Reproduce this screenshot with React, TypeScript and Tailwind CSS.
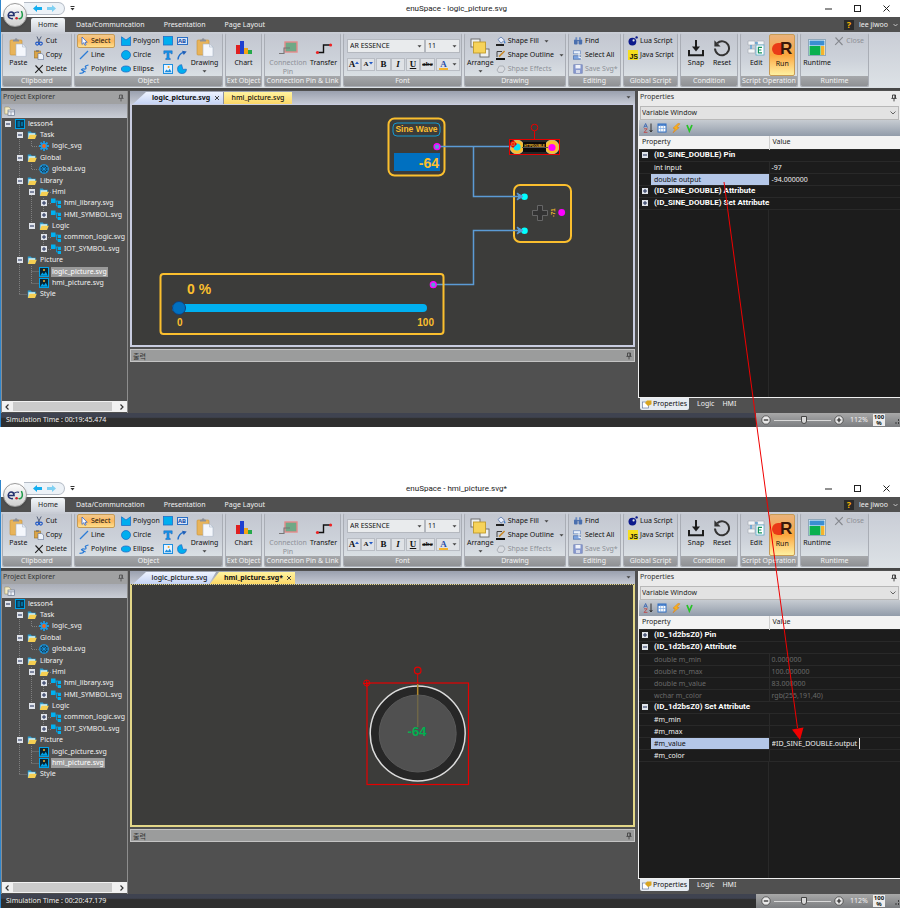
import React from "react";

type IconProps = { w?: number; h?: number; box?: string; className?: string; children: React.ReactNode };

function Icon({ w = 10, h = 10, box, className = "", children }: IconProps) {
  return (
    <svg width={w} height={h} viewBox={box ?? `0 0 ${w} ${h}`} fill="none" className={`shrink-0 ${className}`} aria-hidden="true">
      {children}
    </svg>
  );
}

function Caret({ className = "" }: { className?: string }) {
  return (
    <Icon w={5} h={3} className={className}>
      <path d="M0.5 0.3h4L2.5 2.6z" fill="#444" />
    </Icon>
  );
}

function PinIcon({ color = "#333" }: { color?: string }) {
  return (
    <Icon w={6} h={8}>
      <path d="M1.5 1h3v3.2M1.5 1v3.2M3.9 1v3.2M0.4 4.4h5.2M3 4.4V7.4" stroke={color} strokeWidth="0.9" />
    </Icon>
  );
}

function ClipboardIcon() {
  return (
    <Icon w={18} h={19}>
      <rect x="1" y="2" width="12" height="15" rx="1" fill="#e8b45a" stroke="#c79038" strokeWidth="0.6" />
      <path d="M4 3.6V1.8h1.6a1.5 1.5 0 0 1 3 0H10v1.8z" fill="#8b8f9a" />
      <path d="M7 6h6.5L17 9v9.4H7z" fill="#f4f7fc" stroke="#a9b5c8" strokeWidth="0.6" />
      <path d="M13.5 6v3H17" stroke="#a9b5c8" strokeWidth="0.6" />
    </Icon>
  );
}

function CutIcon() {
  return (
    <Icon>
      <path d="M3 0.5l2.6 6M7.2 0.5L4.2 6.4" stroke="#56617a" strokeWidth="1" />
      <circle cx="3.2" cy="7.6" r="1.5" stroke="#2158c4" strokeWidth="1.1" />
      <circle cx="6.8" cy="7.6" r="1.5" stroke="#2158c4" strokeWidth="1.1" />
    </Icon>
  );
}

function CopyIcon() {
  return (
    <Icon>
      <rect x="0.5" y="1" width="6" height="7" fill="#dca445" stroke="#9c7426" strokeWidth="0.6" />
      <rect x="2" y="0.3" width="3" height="1.5" fill="#777" />
      <path d="M4 3.5h3.6L9.6 5v4.6H4z" fill="#eef3fb" stroke="#5c6c8d" strokeWidth="0.6" />
    </Icon>
  );
}

function CrossIcon({ color = "#222" }: { color?: string }) {
  return (
    <Icon>
      <path d="M1.5 1.5l7 7.5M8.8 1.2L1.2 8.8" stroke={color} strokeWidth="1.1" />
    </Icon>
  );
}

function PictureIcon() {
  return (
    <Icon>
      <rect x="0.5" y="0.5" width="9" height="9" fill="#0a2433" stroke="#00a2e8" />
      <path d="M1 8.8L3.4 5.4 5 7.2 6.8 4.8 9 8.8z" fill="#00a2e8" />
      <circle cx="5" cy="3" r="1" fill="#f4b32c" />
    </Icon>
  );
}

type BigProps = { icon: React.ReactNode; label: React.ReactNode; caret?: boolean; className?: string };

function BigButton({ icon, label, caret, className = "" }: BigProps) {
  return (
    <button className={`flex h-[42px] flex-col items-center pt-[3px] leading-[9px] ${className}`}>
      <span className="flex h-[21px] items-center justify-center">{icon}</span>
      <span className="whitespace-nowrap">{label}</span>
      {caret && <Caret className="mt-[3px]" />}
    </button>
  );
}

type SmallProps = { icon: React.ReactNode; label: string; muted?: boolean; caret?: boolean; active?: boolean };

function SmallButton({ icon, label, muted, caret, active }: SmallProps) {
  const tone = muted ? "text-[#8e9197]" : "text-[#111]";
  const frame = active
    ? "border-[#c79b55] bg-gradient-to-b from-[#f3c98c] via-[#fbb75c] to-[#fde08d] pr-[4px]"
    : "border-transparent";
  return (
    <button className={`flex h-[14px] items-center gap-[2px] whitespace-nowrap rounded-[2px] border px-px ${tone} ${frame}`}>
      {icon}
      <span>{label}</span>
      {caret && <Caret className="ml-[3px]" />}
    </button>
  );
}

function Group({ label, className, children }: { label: string; className: string; children: React.ReactNode }) {
  return (
    <section
      aria-label={label}
      className={`flex h-[54px] shrink-0 flex-col overflow-hidden rounded-[2px] border border-[#a9adb5] border-t-[#c8ccd4] bg-gradient-to-b from-[#c3c7d0] via-[#cdd2da] to-[#e2e8ea] ${className}`}
    >
      <div className="flex flex-1 px-[2px]">{children}</div>
      <div className="h-[10px] whitespace-nowrap bg-gradient-to-b from-[#a6a8ab] to-[#8f9194] text-center leading-[10px] text-[#f4f4f4]">
        {label}
      </div>
    </section>
  );
}

function ToolbarSelect({ label, value, className }: { label: string; value: string; className: string }) {
  return (
    <div className={`relative ${className}`}>
      <select
        aria-label={label}
        className="h-[14px] w-full appearance-none border border-[#b4b8bf] bg-[#e9ebed] pl-[2px] text-[7px] leading-[12px] text-[#111]"
      >
        <option>{value}</option>
      </select>
      <Caret className="pointer-events-none absolute right-[3px] top-[6px]" />
    </div>
  );
}

function Ribbon() {
  const cell = "flex h-[13px] items-center justify-center border border-[#b9bdc4] bg-[#dfe2e6] font-['Liberation_Serif',serif] font-bold";
  return (
    <div className="flex h-[56px] gap-[2px] overflow-hidden bg-gradient-to-b from-[#c9cdd6] to-[#dde2e6] pl-px pt-px text-[7px] text-[#111]">
      <Group label="Clipboard" className="w-[70px]">
        <BigButton className="w-[30px]" icon={<ClipboardIcon />} label="Paste" />
        <div>
          <SmallButton icon={<CutIcon />} label="Cut" />
          <SmallButton icon={<CopyIcon />} label="Copy" />
          <SmallButton icon={<CrossIcon />} label="Delete" />
        </div>
      </Group>
      <Group label="Object" className="w-[149px]">
        <div className="w-[42px]">
          <SmallButton
            active
            label="Select"
            icon={<Icon><path d="M3 1v7.4l1.8-1.7 1.1 2.6 1.2-.5-1.1-2.5h2.2z" fill="#fff" stroke="#2158c4" strokeWidth="0.7" /></Icon>}
          />
          <SmallButton label="Line" icon={<Icon><path d="M1 9L9 1" stroke="#2b7bd6" strokeWidth="1.2" /></Icon>} />
          <SmallButton
            label="Polyline"
            icon={<Icon><path d="M0.5 9.3C6 9 5 7 3.4 6.4S3 4.6 5 5s2.6-1 1.6-1.8S7 1.6 9.5 1M2 5.5L6.6 8" stroke="#2b7bd6" strokeWidth="1.2" /></Icon>}
          />
        </div>
        <div className="w-[42px]">
          <SmallButton label="Polygon" icon={<Icon><path d="M0.5 0.8L5 4 9.5.8v8.7h-9z" fill="#00aeef" stroke="#1f6fc9" strokeWidth="0.8" /></Icon>} />
          <SmallButton label="Circle" icon={<Icon><circle cx="5" cy="5" r="4.5" fill="#00aeef" stroke="#1f6fc9" strokeWidth="0.8" /></Icon>} />
          <SmallButton label="Ellipse" icon={<Icon><ellipse cx="5" cy="5" rx="4.6" ry="3" fill="#00aeef" stroke="#1f6fc9" strokeWidth="0.8" /></Icon>} />
        </div>
        <div className="grid w-[28px] grid-cols-2 content-start">
          <button aria-label="Rectangle" className="flex h-[14px] items-center justify-center">
            <Icon><rect x="0.5" y="0.5" width="9" height="8.5" fill="#00aeef" stroke="#1f6fc9" strokeWidth="0.8" /></Icon>
          </button>
          <button aria-label="Text box" className="flex h-[14px] items-center justify-center">
            <span className="h-[8px] w-[11px] border border-[#2b6fc4] bg-[#d8e6fa] text-center text-[6px] font-bold leading-[6px] text-[#1c4fa4]">AB</span>
          </button>
          <button aria-label="Text" className="flex h-[14px] items-center justify-center">
            <Icon><path d="M0.8 0.8h8.4v3H8L7.4 2.4H6.1v5.7l1.2.5v.9H2.7v-.9l1.2-.5V2.4H2.6L2 3.8H.8z" fill="#1496ea" stroke="#1f5fb9" strokeWidth="0.5" /></Icon>
          </button>
          <button aria-label="Arc" className="flex h-[14px] items-center justify-center">
            <Icon><path d="M1 9.5C1.4 6 3 3.4 6.6 2.4" stroke="#1f6fc9" strokeWidth="1.5" /><path d="M5 0.8l4.7.7-3 3.6z" fill="#1f5fb9" /></Icon>
          </button>
          <button aria-label="Image" className="flex h-[14px] items-center justify-center">
            <Icon><rect x="0.5" y="0.5" width="9" height="9" fill="#e8f4ff" stroke="#1f8fe0" /><path d="M1.5 8.2l2-2.8 1.6 1.6 1.6-2.2 2 3.4z" fill="#1f8fe0" /><circle cx="5.6" cy="3" r="1" fill="#f4a52c" /></Icon>
          </button>
          <button aria-label="Pie" className="flex h-[14px] items-center justify-center">
            <Icon><path d="M4.6 0.7A4.4 4.4 0 1 0 9.4 5.2L5.8 5.4z" fill="#00aeef" stroke="#1f6fc9" strokeWidth="0.8" /></Icon>
          </button>
        </div>
        <BigButton className="w-[31px]" icon={<ClipboardIcon />} label="Drawing" caret />
      </Group>
      <Group label="Ext Object" className="w-[37px]">
        <BigButton
          className="w-full"
          label="Chart"
          icon={
            <Icon w={18} h={16}>
              <rect x="1" y="5" width="4" height="9" fill="#e02020" />
              <rect x="5" y="1" width="4" height="13" fill="#1f3fd0" />
              <rect x="9" y="8" width="4" height="6" fill="#f2a516" />
              <rect x="13" y="10" width="4" height="4" fill="#25a84a" />
            </Icon>
          }
        />
      </Group>
      <Group label="Connection Pin & Link" className="w-[77px]">
        <BigButton
          className="w-[42px] text-[#8e9197]"
          label={<>Connection<br />Pin</>}
          icon={
            <Icon w={20} h={16}>
              <rect x="7" y="2" width="12" height="10" fill="#6fa886" stroke="#e58a8a" strokeWidth="1.4" />
              <path d="M1 13.5h5V8h6" stroke="#777" strokeWidth="1.1" />
            </Icon>
          }
        />
        <BigButton
          className="w-[29px]"
          label="Transfer"
          icon={
            <Icon w={18} h={16}>
              <path d="M2.5 12.5h6V5h7" stroke="#111" strokeWidth="1.4" />
              <circle cx="2.4" cy="12.5" r="1.5" fill="#e22" />
              <circle cx="15.6" cy="5" r="1.5" fill="#e22" />
            </Icon>
          }
        />
      </Group>
      <Group label="Font" className="w-[119px]">
        <div className="flex flex-1 flex-col gap-[5px] px-px pt-[5px]">
          <div className="flex">
            <ToolbarSelect label="Font name" value="AR ESSENCE" className="w-[78px]" />
            <ToolbarSelect label="Font size" value="11" className="w-[35px]" />
          </div>
          <div className="flex justify-between text-[9px]">
            <div className="flex">
              <button aria-label="Grow font" className={`${cell} w-[14px]`}>A<Icon w={4} h={4} className="mb-[4px]"><path d="M0 3h4L2 .6z" fill="#2158c4" /></Icon></button>
              <button aria-label="Shrink font" className={`${cell} w-[14px] text-[7px]`}>A<Icon w={4} h={4} className="mb-[4px]"><path d="M0 1h4L2 3.4z" fill="#2158c4" /></Icon></button>
            </div>
            <div className="flex">
              <button aria-label="Bold" className={`${cell} w-[15px]`}>B</button>
              <button aria-label="Italic" className={`${cell} w-[14px] italic`}>I</button>
            </div>
            <div className="flex">
              <button aria-label="Underline" className={`${cell} w-[14px] underline`}>U</button>
              <button aria-label="Strikethrough" className={`${cell} w-[15px] text-[7px] line-through`}>abc</button>
            </div>
            <button aria-label="Font color" className={`${cell} w-[24px] gap-[4px] text-[#2b4fa8]`}>
              <span className="border-b-2 border-[#f4b32c] px-px leading-[8px]">A</span>
              <Caret />
            </button>
          </div>
        </div>
      </Group>
      <Group label="Drawing" className="w-[102px]">
        <BigButton
          className="w-[29px]"
          label="Arrange"
          caret
          icon={
            <Icon w={20} h={20}>
              <rect x="1" y="1" width="9" height="8" fill="#eef0f2" stroke="#666" strokeWidth="0.9" />
              <rect x="10" y="11" width="9" height="8" fill="#eef0f2" stroke="#666" strokeWidth="0.9" />
              <rect x="3.5" y="4" width="12" height="11" fill="#f6d35a" stroke="#c09a2c" strokeWidth="0.9" />
            </Icon>
          }
        />
        <div>
          <SmallButton
            label="Shape Fill"
            caret
            icon={<Icon><path d="M2 3.5L5 1l3.5 3.2L5 7.2z" fill="#e9eefb" stroke="#5474a8" strokeWidth="0.8" /><path d="M8.4 4.4c1 1.4 1.4 2.4.5 3-.8 0-1-1-.5-3z" fill="#2a72cf" /><rect y="8" width="8" height="2" fill="#222" /></Icon>}
          />
          <SmallButton
            label="Shape Outline"
            caret
            icon={<Icon><path d="M1 7V1.5h5" stroke="#333" strokeWidth="0.9" /><path d="M3 6.6L8.6 1" stroke="#c98a2a" strokeWidth="1.5" /><rect y="8" width="9" height="2" fill="#111" /></Icon>}
          />
          <SmallButton
            muted
            label="Shpae Effects"
            icon={<Icon><path d="M1 6l2.4-4h4L9 5 6.8 8.4H2.6z" fill="#d9dce1" stroke="#a5a9b0" strokeWidth="0.9" /></Icon>}
          />
        </div>
      </Group>
      <Group label="Editing" className="w-[53px]">
        <div>
          <SmallButton label="Find" icon={<Icon><path d="M2.4 1.2h1.8v2.4H2.4zM6 1.2h1.8v2.4H6z" fill="#6b8cc4" /><rect x="1" y="3.6" width="3.6" height="5" rx="1" fill="#4a6fae" /><rect x="5.6" y="3.6" width="3.6" height="5" rx="1" fill="#4a6fae" /><path d="M4 4.6h2" stroke="#4a6fae" /></Icon>} />
          <SmallButton label="Select All" icon={<Icon><rect x="0.5" y="0.8" width="7" height="3" fill="#eaf1fb" stroke="#6b8cc4" strokeWidth="0.7" /><rect x="0.5" y="5.8" width="7" height="3.4" fill="#7fa6e0" stroke="#4a6fae" strokeWidth="0.7" /><path d="M6 3v5l1.2-1 1 1.8" stroke="#fff" strokeWidth="0.9" /></Icon>} />
          <SmallButton muted label="Save Svg*" icon={<Icon><rect x="0.8" y="0.8" width="8.4" height="8.4" fill="#8a9bd0" stroke="#6d7fb5" strokeWidth="0.7" /><rect x="2.5" y="1" width="5" height="3.4" fill="#f0f3fa" /><rect x="3" y="6" width="4" height="3" fill="#d3d9ea" /></Icon>} />
        </div>
      </Group>
      <Group label="Global Script" className="w-[55px]">
        <div>
          <SmallButton label="Lua Script" icon={<Icon><circle cx="4.4" cy="5.6" r="3.9" fill="#0c1a8c" /><circle cx="5.6" cy="4.4" r="1.1" fill="#dfe2e6" /><circle cx="8.6" cy="1.4" r="1.2" fill="#0c1a8c" /></Icon>} />
          <SmallButton
            label="Java Script"
            icon={<span className="flex h-[10px] w-[10px] items-end justify-end bg-[#f5de1e] font-['Liberation_Sans',sans-serif] text-[7px] font-bold leading-[7px]">JS</span>}
          />
        </div>
      </Group>
      <Group label="Condition" className="w-[58px]">
        <BigButton
          className="w-[26px]"
          label="Snap"
          icon={<Icon w={18} h={18}><path d="M9 1v9M2 11v5.2h14V11" stroke="#1c1c1c" strokeWidth="2" /><path d="M5 7.5h8L9 12.5z" fill="#1c1c1c" /></Icon>}
        />
        <BigButton
          className="w-[26px]"
          label="Reset"
          icon={<Icon w={18} h={18}><path d="M4.2 4.2A7 7 0 1 1 2 9.5" stroke="#333" strokeWidth="2" /><path d="M1.4 1.2v6.2h6.2z" fill="#333" /></Icon>}
        />
      </Group>
      <Group label="Script Operation" className="w-[58px]">
        <BigButton
          className="w-[27px]"
          label="Edit"
          icon={
            <Icon w={18} h={17}>
              <path d="M1 2h7v4H1zM10 2h7v4h-7zM1 10h7v4H1z" fill="#f4f6f8" stroke="#a8adb5" strokeWidth="0.7" />
              <path d="M8 4h3M4 6v4" stroke="#2b8fd6" />
              <rect x="9" y="6" width="8" height="10" fill="#fff" stroke="#5aa7c8" strokeWidth="0.8" />
              <path d="M15 8.4h-3.6v5.4H15M11.4 11H14.4" stroke="#12925a" strokeWidth="1.2" />
            </Icon>
          }
        />
        <BigButton
          className="w-[26px] rounded-[2px] border border-[#c79b55] bg-gradient-to-b from-[#eab27a] via-[#fba63c] to-[#fdf0a0]"
          label="Run"
          icon={
            <span className="flex items-center">
              <span className="h-[12px] w-[10px] rounded-l-full bg-[#ea3a17]" />
              <span className="-ml-[2px] font-['Liberation_Sans',sans-serif] text-[17px] font-bold leading-[17px] text-[#3b1708]">R</span>
            </span>
          }
        />
      </Group>
      <Group label="Runtime" className="w-[69px]">
        <BigButton
          className="w-[30px]"
          label="Runtime"
          icon={
            <Icon w={18} h={17}>
              <rect x="0.5" y="0.5" width="17" height="16" fill="#fff" stroke="#8fa8bb" />
              <rect x="1.5" y="1.5" width="15" height="5" fill="#3a8fd2" />
              <rect x="1.5" y="7" width="11" height="9" fill="#0ab04f" />
              <rect x="13" y="7" width="3.5" height="9" fill="#f4b32c" />
            </Icon>
          }
        />
        <div className="pl-px">
          <SmallButton muted label="Close" icon={<CrossIcon color="#85888e" />} />
        </div>
      </Group>
    </div>
  );
}

function Logo() {
  return (
    <button
      aria-label="Application menu"
      className="absolute left-[2px] top-[3px] z-10 flex h-[24px] w-[24px] items-center justify-center rounded-full border border-[#9a9a9a] bg-gradient-to-b from-white via-[#e6e6e6] to-[#cfcfcf] shadow"
    >
      <Icon w={17} h={11}>
        <path d="M1.5 5.5h5.600C7 3 5.600 2 4.200 2S1.200 3.400 1.200 5.500 3 9 6 8.600" stroke="#23306e" strokeWidth="1.500" />
        <path d="M7 3.400C8.600 2 10.600 1.800 12 2.400" stroke="#23306e" strokeWidth="1.200" />
        <circle cx="9.600" cy="8.200" r="1.300" fill="#c8202a" />
        <path d="M14.400 1c1.200 2.800 1 6-.4 7.200-1 .8-1.800.6-2.400 0" stroke="#1d9a48" strokeWidth="1.500" />
      </Icon>
    </button>
  );
}

function TitleBar({ title }: { title: string }) {
  return (
    <header className="flex h-[17px] items-center bg-white text-[8px] text-[#222]">
      <div className="flex w-[90px] items-center pl-[23px]">
        <div className="flex h-[13px] w-[41px] items-center justify-center gap-[5px] rounded-r-full border border-l-0 border-[#b5bcc6] bg-[#edf2f7]">
          <button aria-label="Undo">
            <Icon w={9} h={7}><path d="M0 3.500L4 0v2h5v3H4v2z" fill="#12aef0" /></Icon>
          </button>
          <button aria-label="Redo">
            <Icon w={9} h={7}><path d="M9 3.500L5 0v2H0v3h5v2z" fill="#7fd0f2" /></Icon>
          </button>
        </div>
        <button aria-label="Customize toolbar" className="ml-[5px]">
          <Icon w={5} h={5}><path d="M.5 .5h4" stroke="#333" /><path d="M.500 2h4l-2 2.500z" fill="#333" /></Icon>
        </button>
      </div>
      <h1 className="flex-1 text-center font-['Roboto',sans-serif]">{title}</h1>
      <div className="flex w-[78px] items-center justify-between pl-[2px] pr-[9px]">
        <button aria-label="Minimize"><Icon w={9} h={9}><path d="M1 5h7" stroke="#222" /></Icon></button>
        <button aria-label="Maximize"><Icon w={9} h={9}><rect x="1.500" y="1.500" width="6" height="6" stroke="#222" /></Icon></button>
        <button aria-label="Close"><Icon w={9} h={9}><path d="M1.500 1.500l6 6M7.500 1.500l-6 6" stroke="#222" /></Icon></button>
      </div>
    </header>
  );
}

function MenuTabs() {
  return (
    <nav className="flex h-[15px] items-end bg-[#505050] pl-[30px] pr-[2px] text-[7px] leading-[14px] text-[#f0f0f0]">
      <button className="h-[14px] w-[34px] rounded-t-[2px] bg-gradient-to-b from-[#f2f6f8] to-[#cdd1d9] text-[#222]">Home</button>
      <div className="flex flex-1 gap-[19px] pl-[11px]">
        <button>Data/Communcation</button>
        <button>Presentation</button>
        <button>Page Layout</button>
      </div>
      <button className="flex items-center gap-[5px]">
        <span className="flex h-[10px] w-[10px] items-center justify-center bg-[#2a2a2a] text-[9px] font-bold text-[#f7b500]">?</span>
        lee jiwoo
        <Icon w={5} h={4}><path d="M.5 1l2 2 2-2" stroke="#ddd" strokeWidth="0.8" /></Icon>
      </button>
    </nav>
  );
}

type TreeKind = "project" | "folder" | "gear" | "globe" | "library" | "picture";
type TreeItem = { depth: number; kind: TreeKind; label: string; sign?: "+" | "-" };

const tree: TreeItem[] = [
  { depth: 0, kind: "project", label: "lesson4", sign: "-" },
  { depth: 1, kind: "folder", label: "Task", sign: "-" },
  { depth: 2, kind: "gear", label: "logic_svg" },
  { depth: 1, kind: "folder", label: "Global", sign: "-" },
  { depth: 2, kind: "globe", label: "global.svg" },
  { depth: 1, kind: "folder", label: "Library", sign: "-" },
  { depth: 2, kind: "folder", label: "Hmi", sign: "-" },
  { depth: 3, kind: "library", label: "hmi_library.svg", sign: "+" },
  { depth: 3, kind: "library", label: "HMI_SYMBOL.svg", sign: "+" },
  { depth: 2, kind: "folder", label: "Logic", sign: "-" },
  { depth: 3, kind: "library", label: "common_logic.svg", sign: "+" },
  { depth: 3, kind: "library", label: "IOT_SYMBOL.svg", sign: "+" },
  { depth: 1, kind: "folder", label: "Picture", sign: "-" },
  { depth: 2, kind: "picture", label: "logic_picture.svg" },
  { depth: 2, kind: "picture", label: "hmi_picture.svg" },
  { depth: 1, kind: "folder", label: "Style" },
];

const indents = ["pl-[3px]", "pl-[15px]", "pl-[27px]", "pl-[39px]"];

function TreeIcon({ kind }: { kind: TreeKind }) {
  if (kind === "picture") return <PictureIcon />;
  if (kind === "project")
    return (
      <Icon>
        <rect x="0.5" y="0.5" width="9" height="9" fill="#073a55" stroke="#00a2e8" />
        <path d="M2.500 3h2.500M2.500 5h2.500M2.500 7h2.500M7 3v4" stroke="#00a2e8" />
      </Icon>
    );
  if (kind === "gear")
    return (
      <Icon>
        <path d="M5 0v10M0 5h10M1.500 1.500l7 7M8.500 1.500l-7 7" stroke="#1a9be6" strokeWidth="1.800" />
        <circle cx="5" cy="5" r="3.200" fill="#1a9be6" />
        <circle cx="5" cy="5" r="1.900" fill="#f2661c" />
      </Icon>
    );
  if (kind === "globe")
    return (
      <Icon>
        <circle cx="5" cy="5" r="4.300" stroke="#1a9be6" strokeWidth="1.100" fill="#123d55" />
        <path d="M5 .7v8.600M.7 5h8.600M2 2l6 6M8 2L2 8" stroke="#1a9be6" strokeWidth="0.800" />
      </Icon>
    );
  if (kind === "library")
    return (
      <Icon>
        <path d="M3 3h4M5.500 3v5H8" stroke="#00a2e8" strokeWidth="0.800" />
        <path d="M0 .5h4.500V5H0zM6.800 2.800H10V6H6.800zM6.800 7H10v3H6.800z" fill="#00b0f0" />
      </Icon>
    );
  return (
    <Icon>
      <path d="M.8 8.800V1.600h3l1 1.200h4v2" fill="#2f9fd0" />
      <path d="M1.400 3.200h6.600v5H1.400z" fill="#c8ecf5" />
      <path d="M.8 9L2.600 4.800h7.200L8 9z" fill="#f6cf52" />
    </Icon>
  );
}

function ExpandBox({ sign }: { sign: "+" | "-" }) {
  return (
    <Icon w={6} h={6}>
      <rect width="6" height="6" fill="#dfe3ea" />
      <path d={sign === "+" ? "M1 3h4M3 1v4" : "M1 3h4"} stroke="#1c2b55" strokeWidth="1" />
    </Icon>
  );
}

function ProjectExplorer({ selected }: { selected: string }) {
  return (
    <aside className="flex w-[127px] shrink-0 flex-col border-x border-[#8d8d8d] bg-[#505050] text-[7px]">
      <div className="flex h-[13px] items-center justify-between bg-[#a0a1a2] px-px text-[#333]">
        <h2>Project Explorer</h2>
        <button aria-label="Pin explorer" className="pr-[2px]"><PinIcon color="#555" /></button>
      </div>
      <div className="flex h-[14px] items-center bg-gradient-to-b from-[#a9adb7] to-[#c9cdd5] px-[2px]">
        <button aria-label="Show properties">
          <Icon w={11} h={10}>
            <path d="M.8 1h4l2 2v5h-6z" fill="#f6ecc2" stroke="#9b9068" strokeWidth="0.600" />
            <rect x="4" y="4" width="6.500" height="5.500" fill="#eef2f8" stroke="#6b7890" strokeWidth="0.700" />
            <path d="M4 5.800h6.500M7 5.800v3.700" stroke="#6b7890" strokeWidth="0.600" />
          </Icon>
        </button>
      </div>
      <div className="relative flex-1 overflow-hidden text-[#f0f0f0]">
        <svg className="absolute left-0 top-0" width="60" height="182" fill="none" stroke="#808080" strokeDasharray="1 1" aria-hidden="true">
          <path d="M17.500 17v160M17.500 176.500h7M29.500 23v5.500h7M29.500 46v5.500h7M29.500 69v35M41.500 80v17M41.500 114v17M41.500 62.500h7M29.500 148v17M29.500 153.500h7M29.500 165.500h7M44 74.500h6M44 85.500h6M44 119.500h6M44 131.500h6" />
        </svg>
        <ul className="relative grid h-[182px] auto-rows-fr">
          {tree.map((item) => (
            <li key={item.label} className={`flex items-center whitespace-nowrap ${indents[item.depth]}`}>
              <span className="w-[10px]">{item.sign && <ExpandBox sign={item.sign} />}</span>
              <TreeIcon kind={item.kind} />
              <span className={`ml-[2px] px-px leading-[10px] ${item.label === selected ? "bg-[#9a9a9a] text-white" : ""}`}>{item.label}</span>
            </li>
          ))}
        </ul>
      </div>
      <div className="mb-px flex h-[11px] items-center justify-between bg-[#f1f1f1] px-[3px]">
        <button aria-label="Scroll left"><Icon w={4} h={6}><path d="M3.500 .5L1 3l2.500 2.500" stroke="#333" strokeWidth="1.200" /></Icon></button>
        <span className="ml-[4px] mr-[8px] h-[9px] flex-1 bg-[#cbcbcb]" />
        <button aria-label="Scroll right"><Icon w={4} h={6}><path d="M.5 .5L3 3 .5 5.500" stroke="#333" strokeWidth="1.200" /></Icon></button>
      </div>
    </aside>
  );
}

function TabClose() {
  return (
    <button aria-label="Close tab">
      <Icon w={6} h={6}><path d="M1 1l4 4M5 1L1 5" stroke="#333" strokeWidth="0.900" /></Icon>
    </button>
  );
}

function OutputPanel() {
  return (
    <section className="mt-[2px] flex flex-1 flex-col">
      <div className="flex h-[13px] items-center justify-between border border-[#c4c4c4] bg-[#9b9c9c] px-[2px] text-[7px] text-[#333]">
        <h2 className="font-['Noto_Sans_CJK_KR',sans-serif] leading-[10px]">출력</h2>
        <button aria-label="Pin output"><PinIcon color="#444" /></button>
      </div>
    </section>
  );
}

function LogicCanvas() {
  return (
    <div className="relative h-[240px] overflow-hidden bg-[#3c3c3a]">
      <svg className="absolute left-0 top-0 font-['Liberation_Sans',sans-serif]" width="502" height="240" viewBox="132 105 502 240" fill="none">
        <rect x="388.500" y="118.500" width="56" height="57" rx="6" stroke="#fbbf2e" strokeWidth="2" />
        <rect x="393" y="123" width="47" height="13" rx="4" stroke="#1499d0" />
        <text x="416.500" y="132" textAnchor="middle" fontSize="8.500" fontWeight="bold" fill="#fbbf2e">Sine Wave</text>
        <rect x="394" y="153" width="46" height="18" fill="#0070c0" />
        <text x="439" y="168" textAnchor="end" fontSize="14" fontWeight="bold" fill="#fbbf2e">-64</text>

        <rect x="514" y="185" width="57" height="57" rx="6" stroke="#fbbf2e" strokeWidth="2" />
        <path d="M537.500 205.500h5v5h5v5h-5v5h-5v-5h-5v-5h5z" fill="#333" stroke="#666" />
        <text transform="translate(555 217) rotate(-90)" fontSize="6" fontWeight="bold" fill="#fbbf2e">-71</text>
        <circle cx="561.700" cy="212.500" r="3.400" fill="#ff00ff" />
        <circle cx="524.500" cy="196.700" r="3.300" fill="#00ffff" />
        <circle cx="524.500" cy="230.700" r="3.300" fill="#00ffff" />

        <rect x="510" y="140" width="49" height="14" fill="#262626" />
        <circle cx="517" cy="147" r="7" fill="#fbbf2e" stroke="#d8c9a0" strokeWidth="0.800" />
        <circle cx="552" cy="147" r="7" fill="#fbbf2e" stroke="#d8c9a0" strokeWidth="0.800" />
        <rect x="523" y="142" width="23" height="10" fill="#0a0a0a" />
        <path d="M522 147.500h26" stroke="#555" />
        <text x="534.500" y="146.500" textAnchor="middle" fontSize="3" fontWeight="bold" fill="#fbbf2e">HTTPDOUBLE</text>
        <circle cx="517" cy="147" r="3.600" fill="#00e5f5" />
        <circle cx="552" cy="147.500" r="3.600" fill="#ff00ff" />

        <path d="M437 146.500h75M473.500 146.500v50h47M433 284.500h40.500v-54h47" stroke="#5b9bd5" strokeWidth="1.500" />
        <path d="M517 193l6 3.500-6 3.500 2-3.500zM517 227l6 3.500-6 3.500 2-3.500z" stroke="#5b9bd5" fill="#5b9bd5" />
        <circle cx="437" cy="146.700" r="2.900" fill="#5b9bd5" stroke="#ff00ff" strokeWidth="1.400" />
        <circle cx="433.300" cy="284.700" r="2.900" fill="#5b9bd5" stroke="#ff00ff" strokeWidth="1.400" />

        <rect x="509.500" y="139.500" width="50" height="15" stroke="#e60000" />
        <path d="M534.500 139V131M513 140v8M509 144h8" stroke="#e60000" />
        <circle cx="513" cy="144" r="2.600" stroke="#e60000" />
        <circle cx="534.500" cy="127.500" r="3.300" stroke="#e60000" />
        <rect x="160.500" y="274" width="283" height="60" rx="3" stroke="#fbbf2e" strokeWidth="2" />
      </svg>
      <div className="absolute left-[40px] top-[175px] w-[262px] font-['Liberation_Sans',sans-serif] font-bold text-[#fbbf2e]">
        <label htmlFor="level" className="block pl-[15px] text-[14px] leading-[18px]">0 %</label>
        <input
          id="level"
          type="range"
          min="0"
          max="100"
          defaultValue="0"
          className="mt-[2px] block h-[15px] w-[255px] appearance-none bg-transparent [&::-webkit-slider-runnable-track]:h-[8px] [&::-webkit-slider-runnable-track]:rounded-full [&::-webkit-slider-runnable-track]:bg-[#00b0f0] [&::-webkit-slider-thumb]:-mt-[3px] [&::-webkit-slider-thumb]:h-[14px] [&::-webkit-slider-thumb]:w-[14px] [&::-webkit-slider-thumb]:appearance-none [&::-webkit-slider-thumb]:rounded-full [&::-webkit-slider-thumb]:border [&::-webkit-slider-thumb]:border-[#123f7a] [&::-webkit-slider-thumb]:bg-[#0070c0]"
        />
        <div className="mt-px flex justify-between pl-[5px] text-[10px] leading-[14px]">
          <span>0</span>
          <span>100</span>
        </div>
      </div>
    </div>
  );
}

function HmiCanvas() {
  return (
    <div className="relative h-[240px] overflow-hidden bg-[#3c3c3a]">
      <svg className="absolute left-0 top-0 font-['Liberation_Sans',sans-serif]" width="502" height="240" viewBox="132 585 502 240" fill="none">
        <circle cx="417.700" cy="733.500" r="47.500" fill="#272727" stroke="#dcdcdc" strokeWidth="1.500" />
        <circle cx="417.700" cy="733.500" r="38.500" fill="#505050" stroke="#5a5a5a" />
        <path d="M417.700 684v11" stroke="#b48a2c" strokeWidth="1.500" />
        <path d="M417.700 695v32" stroke="#6e6648" strokeWidth="1.500" />
        <text x="417" y="736" textAnchor="middle" fontSize="13" fontWeight="bold" fill="#00b050">-64</text>
        <rect x="367" y="683" width="101.500" height="101.500" stroke="#e60000" strokeWidth="1.200" />
        <path d="M417.700 683v-9M363 683.500h7.500M366.700 680v7" stroke="#e60000" />
        <circle cx="366.700" cy="683" r="3" stroke="#e60000" />
        <circle cx="417.700" cy="670.500" r="3.300" stroke="#e60000" strokeWidth="1.200" />
      </svg>
    </div>
  );
}

type PropRow = { name: string; value?: string; group?: "+" | "-"; muted?: boolean; selected?: boolean; editing?: boolean };

function PropertiesPanel({ rows }: { rows: PropRow[] }) {
  return (
    <aside className="relative flex w-[262px] shrink-0 flex-col text-[7px]">
      <div className="flex flex-1 flex-col border-b border-l border-[#f0f0f0] bg-[#1c1c1c]">
        <div className="flex h-[13px] items-center justify-between bg-[#ebebeb] pl-px pr-[3px] text-[#333]">
          <h2>Properties</h2>
          <button aria-label="Pin properties"><PinIcon /></button>
        </div>
        <div className="relative bg-[#ebebeb] px-px pt-[2px]">
          <select aria-label="Window" className="h-[14px] w-full appearance-none border border-[#b8b8b8] bg-[#e2e2e2] px-px text-[7px] leading-[12px] text-[#222]">
            <option>Variable Window</option>
          </select>
          <Icon w={6} h={4} className="pointer-events-none absolute right-[4px] top-[7px]"><path d="M.5 .5L3 3l2.500-2.500" stroke="#555" strokeWidth="0.900" /></Icon>
        </div>
        <div className="flex h-[16px] items-center gap-[4px] bg-gradient-to-b from-[#c7ccd2] to-[#929caa] pl-[4px]">
          <button aria-label="Sort">
            <Icon w={10} h={10}><path d="M.8 4.600L2.600 .5l1.800 4.100M1.400 3.300h2.400" stroke="#3060b0" strokeWidth="0.800" /><path d="M1 5.800h3.200L1 9.400h3.400" stroke="#c04040" strokeWidth="0.800" /><path d="M8 .5v8M6.700 7L8 9l1.300-2" stroke="#333" /></Icon>
          </button>
          <button aria-label="Categories">
            <Icon w={10} h={10}><rect x="1" y="1" width="8" height="8" fill="#fff" stroke="#2f6fc4" /><path d="M1 2h8" stroke="#2f6fc4" strokeWidth="1.600" /><path d="M3.700 2v7M6.300 2v7M1 5.500h8" stroke="#7aa7e0" strokeWidth="0.700" /></Icon>
          </button>
          <button aria-label="Events">
            <Icon w={10} h={10}><path d="M7 .5L2 5.200l2.200.5L2 9.800l6.200-5.200-2.400-.5L9 .8z" fill="#f9b31c" stroke="#dd7d12" strokeWidth="0.500" /></Icon>
          </button>
          <button aria-label="Variables">
            <Icon w={9} h={10}><path d="M2 2l2.400 6L7 2" stroke="#27c327" strokeWidth="1.700" /></Icon>
          </button>
        </div>
        <table className="w-full table-fixed border-collapse text-left text-[#f0f0f0]">
          <thead>
            <tr className="h-[13px] bg-[#f3f3f3] text-[#222]">
              <th className="w-[130px] border-r border-[#d0d0d0] p-0 pl-[3px] font-normal leading-[12px]">Property</th>
              <th className="p-0 pl-[3px] font-normal leading-[12px]">Value</th>
            </tr>
          </thead>
          <tbody>
            {rows.map((row) =>
              row.group ? (
                <tr key={row.name} className="h-[12px] border-t border-[#292929]">
                  <td colSpan={2} className="p-0 font-['Roboto',sans-serif] text-[8px] font-bold text-white">
                    <div className="flex h-[11px] items-center gap-[6px] pl-[3px]">
                      <ExpandBox sign={row.group} />
                      {row.name}
                    </div>
                  </td>
                </tr>
              ) : (
                <tr key={row.name} className={`h-[12px] border-t border-[#292929] ${row.muted ? "text-[#6a6a6a]" : ""}`}>
                  <td className="border-r border-[#292929] p-0 pl-[12px]">
                    <div className={`h-[11px] pl-[3px] leading-[11px] ${row.selected ? "bg-[#b4c7e8] text-[#111]" : ""}`}>{row.name}</div>
                  </td>
                  <td className="p-0 pl-[2px] leading-[11px]">
                    {row.editing ? (
                      <div className="flex">
                        <input
                          aria-label={row.name}
                          defaultValue={row.value}
                          className="h-[11px] w-[88px] border-r border-[#ddd] bg-transparent p-0 text-[7px] leading-[11px] text-[#f0f0f0]"
                        />
                      </div>
                    ) : (
                      row.value
                    )}
                  </td>
                </tr>
              )
            )}
          </tbody>
        </table>
        <div className="flex flex-1">
          <div className="w-[130px] border-r border-t border-[#292929]" />
          <div className="flex-1 border-t border-[#292929]" />
        </div>
      </div>
      <nav className="flex h-[15px] items-start gap-[8px] pl-[2px] text-[#f0f0f0]">
        <button className="flex h-[12px] items-center gap-px rounded-b-[2px] bg-[#e6ebf1] px-[2px] text-[#111]">
          <Icon w={10} h={9}><rect x="0.500" y="2" width="6" height="6" fill="#fff" stroke="#6a7da0" strokeWidth="0.700" /><path d="M3 3l2-2.400h4.500v3.600L6 6z" fill="#d9a520" /></Icon>
          Properties
        </button>
        <button className="h-[12px]">Logic</button>
        <button className="h-[12px]">HMI</button>
      </nav>
    </aside>
  );
}

function StatusBar({ time }: { time: string }) {
  return (
    <footer className="flex h-[14px] items-center justify-between bg-gradient-to-b from-[#3f4350] from-30% to-[#2f2f2f] to-40% pl-[5px] text-[7px] text-[#f0f0f0]">
      <span>Simulation Time : {time}</span>
      <div className="flex h-[14px] w-[144px] items-center gap-[3px] bg-gradient-to-b from-[#a8a8a8] to-[#7b7d80] pl-[5px]">
        <button aria-label="Zoom out">
          <Icon><circle cx="5" cy="5" r="4.200" fill="#e8e8e8" stroke="#444" strokeWidth="0.800" /><path d="M2.800 5h4.400" stroke="#222" strokeWidth="1.200" /></Icon>
        </button>
        <input
          type="range"
          aria-label="Zoom"
          defaultValue="52"
          className="h-[10px] w-[57px] appearance-none bg-transparent [&::-webkit-slider-runnable-track]:h-px [&::-webkit-slider-runnable-track]:bg-[#d8d8d8] [&::-webkit-slider-thumb]:-mt-[4px] [&::-webkit-slider-thumb]:h-[8px] [&::-webkit-slider-thumb]:w-[6px] [&::-webkit-slider-thumb]:appearance-none [&::-webkit-slider-thumb]:rounded-b-[3px] [&::-webkit-slider-thumb]:border [&::-webkit-slider-thumb]:border-[#444] [&::-webkit-slider-thumb]:bg-[#d8d8d8]"
        />
        <button aria-label="Zoom in">
          <Icon><circle cx="5" cy="5" r="4.200" fill="#e8e8e8" stroke="#444" strokeWidth="0.800" /><path d="M2.800 5h4.400M5 2.800v4.400" stroke="#222" strokeWidth="1.200" /></Icon>
        </button>
        <span className="ml-[3px] w-[20px]">112%</span>
        <button className="flex h-[12px] w-[12px] flex-col items-center bg-[#eee] text-[6px] font-bold leading-[6px] text-[#111]">
          <span>100</span>
          <span>%</span>
        </button>
        <Icon w={6} h={8} className="ml-auto"><path d="M4 7h1M4 4h1M1.500 7h1" stroke="#222" strokeWidth="1.500" /></Icon>
      </div>
    </footer>
  );
}

type WindowProps = {
  title: string;
  selected: string;
  time: string;
  rows: PropRow[];
  bodyClass: string;
  canvasClass: string;
  tabs: React.ReactNode;
  canvas: React.ReactNode;
};

function AppWindow({ title, selected, time, rows, bodyClass, canvasClass, tabs, canvas }: WindowProps) {
  return (
    <section className="relative border-l border-[#2f86cc] bg-[#505050]">
      <Logo />
      <TitleBar title={title} />
      <MenuTabs />
      <Ribbon />
      <div className={`flex border-t-2 border-[#474747] pt-px ${bodyClass}`}>
        <ProjectExplorer selected={selected} />
        <main className="mx-[2px] mr-[3px] flex min-w-0 flex-1 flex-col">
          <div className="flex h-[13px] items-end bg-gradient-to-b from-[#9aa0ae] to-[#c6cad4] pl-[3px] pr-[4px] text-[7px] leading-[12px] text-[#111]">
            {tabs}
            <button aria-label="Tab list" className="mb-[5px] ml-auto"><Caret /></button>
          </div>
          <div className={canvasClass}>{canvas}</div>
          <OutputPanel />
        </main>
        <PropertiesPanel rows={rows} />
      </div>
      <StatusBar time={time} />
    </section>
  );
}

const logicRows: PropRow[] = [
  { name: "(ID_SINE_DOUBLE) Pin", group: "-" },
  { name: "int input", value: "-97" },
  { name: "double output", value: "-94.000000", selected: true },
  { name: "(ID_SINE_DOUBLE) Attribute", group: "+" },
  { name: "(ID_SINE_DOUBLE) Set Attribute", group: "+" },
];

const hmiRows: PropRow[] = [
  { name: "(ID_1d2bsZ0) Pin", group: "+" },
  { name: "(ID_1d2bsZ0) Attribute", group: "-" },
  { name: "double m_min", value: "0.000000", muted: true },
  { name: "double m_max", value: "100.000000", muted: true },
  { name: "double m_value", value: "83.000000", muted: true },
  { name: "wchar m_color", value: "rgb(255,191,40)", muted: true },
  { name: "(ID_1d2bsZ0) Set Attribute", group: "-" },
  { name: "#m_min" },
  { name: "#m_max" },
  { name: "#m_value", value: "#ID_SINE_DOUBLE.output", selected: true, editing: true },
  { name: "#m_color" },
];

export default function App() {
  return (
    <div className="relative flex min-h-screen flex-col gap-[53px] bg-white font-['Noto_Sans',sans-serif]">
      <AppWindow
        title="enuSpace - logic_picture.svg"
        selected="logic_picture.svg"
        time="00:19:45.474"
        rows={logicRows}
        bodyClass="h-[325px]"
        canvasClass="border-2 border-t border-[#c9cde0]"
        canvas={<LogicCanvas />}
        tabs={
          <>
            <div className="flex h-[12px] w-[90px] items-center justify-between bg-gradient-to-b from-[#eef3ff] to-[#c5d3f3] pl-[19px] pr-[3px] font-bold [clip-path:polygon(13px_0,100%_0,100%_100%,0_100%)]">
              <button>logic_picture.svg</button>
              <TabClose />
            </div>
            <button className="h-[12px] w-[69px] border-l border-[#8d92a0] bg-gradient-to-b from-[#fff3a0] to-[#fbd766] font-medium">hmi_picture.svg</button>
          </>
        }
      />
      <AppWindow
        title="enuSpace - hmi_picture.svg*"
        selected="hmi_picture.svg"
        time="00:20:47.179"
        rows={hmiRows}
        bodyClass="h-[326px]"
        canvasClass="border-2 border-t border-[#e3d788] [border-top-style:dotted]"
        canvas={<HmiCanvas />}
        tabs={
          <>
            <button className="h-[12px] w-[83px] bg-gradient-to-b from-[#eef3ff] to-[#c5d3f3] pl-[10px] font-medium [clip-path:polygon(13px_0,100%_0,76px_100%,0_100%)]">logic_picture.svg</button>
            <div className="-ml-[6px] flex h-[12px] w-[85px] items-center justify-between bg-gradient-to-b from-[#fff3a0] to-[#fbd766] pl-[14px] pr-[3px] font-bold [clip-path:polygon(9px_0,100%_0,100%_100%,0_100%)]">
              <button>hmi_picture.svg*</button>
              <TabClose />
            </div>
          </>
        }
      />
      <svg className="pointer-events-none absolute right-0 top-0" width="262" height="908" viewBox="638 0 262 908" fill="none" aria-hidden="true">
        <path d="M724 182L797.500 728" stroke="#f00000" strokeWidth="1" />
        <path d="M792 729.500l11.500-2-3.500 12.500z" fill="#f00000" />
      </svg>
    </div>
  );
}
